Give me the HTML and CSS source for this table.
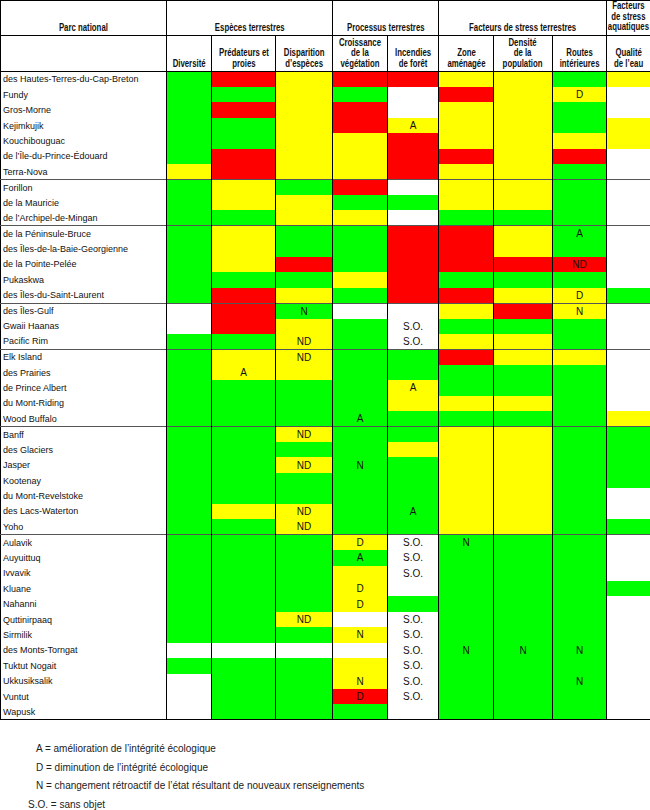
FILE: index.html
```html
<!DOCTYPE html>
<html lang="fr">
<head>
<meta charset="utf-8">
<title>Parcs nationaux</title>
<link rel="stylesheet" href="styles.css">
</head>
<body>
<table class="grid">
<colgroup>
<col class="c-name"><col class="c-div"><col class="c-pred"><col class="c-disp"><col class="c-croi"><col class="c-inc"><col class="c-zone"><col class="c-dens"><col class="c-rout"><col class="c-qual">
</colgroup>
<thead>
<tr class="h1">
<th><span class="t">Parc national</span></th>
<th colspan="3"><span class="t">Espèces terrestres</span></th>
<th colspan="2"><span class="t">Processus terrestres</span></th>
<th colspan="3"><span class="t">Facteurs de stress terrestres</span></th>
<th class="top"><span class="t">Facteurs<br>de stress<br>aquatiques</span></th>
</tr>
<tr class="h2">
<th></th>
<th><span class="t">Diversité</span></th>
<th><span class="t">Prédateurs et<br>proies</span></th>
<th><span class="t">Disparition<br>d’espèces</span></th>
<th><span class="t">Croissance<br>de la<br>végétation</span></th>
<th><span class="t">Incendies<br>de forêt</span></th>
<th><span class="t">Zone<br>aménagée</span></th>
<th><span class="t">Densité<br>de la<br>population</span></th>
<th><span class="t">Routes<br>intérieures</span></th>
<th><span class="t">Qualité<br>de l’eau</span></th>
</tr>
</thead>
<tbody>
<tr class="sep"><th>des Hautes-Terres-du-Cap-Breton</th><td class="g"></td><td class="r"></td><td class="y"></td><td class="r"></td><td class="r"></td><td class="y"></td><td class="y"></td><td class="g"></td><td class="y"></td></tr>
<tr><th>Fundy</th><td class="g"></td><td class="g"></td><td class="y"></td><td class="g"></td><td></td><td class="r"></td><td class="y"></td><td class="y">D</td><td></td></tr>
<tr><th>Gros-Morne</th><td class="g"></td><td class="r"></td><td class="y"></td><td class="r"></td><td></td><td class="y"></td><td class="y"></td><td class="g"></td><td></td></tr>
<tr><th>Kejimkujik</th><td class="g"></td><td class="g"></td><td class="y"></td><td class="r"></td><td class="y">A</td><td class="y"></td><td class="y"></td><td class="g"></td><td class="y"></td></tr>
<tr><th>Kouchibouguac</th><td class="g"></td><td class="g"></td><td class="y"></td><td class="y"></td><td class="r"></td><td class="y"></td><td class="y"></td><td class="y"></td><td class="y"></td></tr>
<tr><th>de l’Île-du-Prince-Édouard</th><td class="g"></td><td class="r"></td><td class="y"></td><td class="y"></td><td class="r"></td><td class="r"></td><td class="y"></td><td class="r"></td><td></td></tr>
<tr><th>Terra-Nova</th><td class="y"></td><td class="r"></td><td class="y"></td><td class="y"></td><td class="r"></td><td class="y"></td><td class="y"></td><td class="g"></td><td></td></tr>

<tr class="sep"><th>Forillon</th><td class="g"></td><td class="y"></td><td class="g"></td><td class="r"></td><td></td><td class="y"></td><td class="y"></td><td class="g"></td><td></td></tr>
<tr><th>de la Mauricie</th><td class="g"></td><td class="y"></td><td class="y"></td><td class="g"></td><td class="g"></td><td class="y"></td><td class="y"></td><td class="g"></td><td></td></tr>
<tr><th>de l’Archipel-de-Mingan</th><td class="g"></td><td class="g"></td><td class="y"></td><td class="y"></td><td></td><td class="g"></td><td class="g"></td><td class="g"></td><td></td></tr>

<tr class="sep"><th>de la Péninsule-Bruce</th><td class="g"></td><td class="y"></td><td class="g"></td><td class="g"></td><td class="r"></td><td class="r"></td><td class="y"></td><td class="g">A</td><td></td></tr>
<tr><th>des Îles-de-la-Baie-Georgienne</th><td class="g"></td><td class="y"></td><td class="g"></td><td class="g"></td><td class="r"></td><td class="r"></td><td class="y"></td><td class="g"></td><td></td></tr>
<tr><th>de la Pointe-Pelée</th><td class="g"></td><td class="y"></td><td class="r"></td><td class="g"></td><td class="r"></td><td class="r"></td><td class="r"></td><td class="r">ND</td><td></td></tr>
<tr><th>Pukaskwa</th><td class="g"></td><td class="g"></td><td class="g"></td><td class="y"></td><td class="r"></td><td class="g"></td><td class="g"></td><td class="g"></td><td></td></tr>
<tr><th>des Îles-du-Saint-Laurent</th><td class="g"></td><td class="r"></td><td class="y"></td><td class="g"></td><td class="r"></td><td class="r"></td><td class="y"></td><td class="y">D</td><td class="g"></td></tr>

<tr class="sep"><th>des Îles-Gulf</th><td></td><td class="r"></td><td class="g">N</td><td></td><td></td><td class="y"></td><td class="r"></td><td class="y">N</td><td></td></tr>
<tr><th>Gwaii Haanas</th><td></td><td class="r"></td><td class="y"></td><td class="g"></td><td>S.O.</td><td class="g"></td><td class="g"></td><td class="g"></td><td></td></tr>
<tr><th>Pacific Rim</th><td class="g"></td><td class="g"></td><td class="y">ND</td><td class="g"></td><td>S.O.</td><td class="y"></td><td class="y"></td><td class="g"></td><td></td></tr>

<tr class="sep"><th>Elk Island</th><td class="g"></td><td class="y"></td><td class="y">ND</td><td class="g"></td><td class="g"></td><td class="r"></td><td class="y"></td><td class="y"></td><td></td></tr>
<tr><th>des Prairies</th><td class="g"></td><td class="y">A</td><td class="y"></td><td class="g"></td><td class="g"></td><td class="g"></td><td class="g"></td><td class="g"></td><td></td></tr>
<tr><th>de Prince Albert</th><td class="g"></td><td class="g"></td><td class="g"></td><td class="g"></td><td class="y">A</td><td class="g"></td><td class="g"></td><td class="g"></td><td></td></tr>
<tr><th>du Mont-Riding</th><td class="g"></td><td class="g"></td><td class="g"></td><td class="g"></td><td class="y"></td><td class="y"></td><td class="y"></td><td class="g"></td><td></td></tr>
<tr><th>Wood Buffalo</th><td class="g"></td><td class="g"></td><td class="g"></td><td class="g">A</td><td class="g"></td><td class="g"></td><td class="g"></td><td class="g"></td><td class="y"></td></tr>

<tr class="sep"><th>Banff</th><td class="g"></td><td class="g"></td><td class="y">ND</td><td class="g"></td><td class="g"></td><td class="y"></td><td class="y"></td><td class="g"></td><td class="g"></td></tr>
<tr><th>des Glaciers</th><td class="g"></td><td class="g"></td><td class="g"></td><td class="g"></td><td class="y"></td><td class="y"></td><td class="y"></td><td class="g"></td><td class="g"></td></tr>
<tr><th>Jasper</th><td class="g"></td><td class="g"></td><td class="y">ND</td><td class="g">N</td><td class="g"></td><td class="y"></td><td class="y"></td><td class="g"></td><td class="g"></td></tr>
<tr><th>Kootenay</th><td class="g"></td><td class="g"></td><td class="g"></td><td class="g"></td><td class="g"></td><td class="y"></td><td class="y"></td><td class="g"></td><td class="g"></td></tr>
<tr><th>du Mont-Revelstoke</th><td class="g"></td><td class="g"></td><td class="g"></td><td class="g"></td><td class="g"></td><td class="y"></td><td class="y"></td><td class="g"></td><td></td></tr>
<tr><th>des Lacs-Waterton</th><td class="g"></td><td class="y"></td><td class="y">ND</td><td class="g"></td><td class="g">A</td><td class="y"></td><td class="y"></td><td class="g"></td><td></td></tr>
<tr><th>Yoho</th><td class="g"></td><td class="g"></td><td class="y">ND</td><td class="g"></td><td class="g"></td><td class="y"></td><td class="y"></td><td class="g"></td><td class="g"></td></tr>

<tr class="sep"><th>Aulavik</th><td class="g"></td><td class="g"></td><td class="g"></td><td class="y">D</td><td>S.O.</td><td class="g">N</td><td class="g"></td><td class="g"></td><td></td></tr>
<tr><th>Auyuittuq</th><td class="g"></td><td class="g"></td><td class="g"></td><td class="g">A</td><td>S.O.</td><td class="g"></td><td class="g"></td><td class="g"></td><td></td></tr>
<tr><th>Ivvavik</th><td class="g"></td><td class="g"></td><td class="g"></td><td class="y"></td><td>S.O.</td><td class="g"></td><td class="g"></td><td class="g"></td><td></td></tr>
<tr><th>Kluane</th><td class="g"></td><td class="g"></td><td class="g"></td><td class="y">D</td><td></td><td class="g"></td><td class="g"></td><td class="g"></td><td class="g"></td></tr>
<tr><th>Nahanni</th><td class="g"></td><td class="g"></td><td class="g"></td><td class="y">D</td><td class="g"></td><td class="g"></td><td class="g"></td><td class="g"></td><td></td></tr>
<tr><th>Quttinirpaaq</th><td class="g"></td><td class="g"></td><td class="y">ND</td><td></td><td>S.O.</td><td class="g"></td><td class="g"></td><td class="g"></td><td></td></tr>
<tr><th>Sirmilik</th><td class="g"></td><td class="g"></td><td class="g"></td><td class="y">N</td><td>S.O.</td><td class="g"></td><td class="g"></td><td class="g"></td><td></td></tr>
<tr><th>des Monts-Torngat</th><td></td><td></td><td></td><td></td><td>S.O.</td><td class="g">N</td><td class="g">N</td><td class="g">N</td><td></td></tr>
<tr><th>Tuktut Nogait</th><td class="g"></td><td class="g"></td><td class="g"></td><td class="y"></td><td>S.O.</td><td class="g"></td><td class="g"></td><td class="g"></td><td></td></tr>
<tr><th>Ukkusiksalik</th><td></td><td class="g"></td><td class="g"></td><td class="y">N</td><td>S.O.</td><td class="g"></td><td class="g"></td><td class="g">N</td><td></td></tr>
<tr><th>Vuntut</th><td></td><td class="g"></td><td class="g"></td><td class="r">D</td><td>S.O.</td><td class="g"></td><td class="g"></td><td class="g"></td><td></td></tr>
<tr><th>Wapusk</th><td></td><td class="g"></td><td class="g"></td><td class="g"></td><td></td><td class="g"></td><td class="g"></td><td class="g"></td><td></td></tr>
</tbody>
</table>

<div class="legend">
<p>A = amélioration de l’intégrité écologique</p>
<p>D = diminution de l’intégrité écologique</p>
<p>N = changement rétroactif de l’état résultant de nouveaux renseignements</p>
<p class="out">S.O. = sans objet</p>
</div>
</body>
</html>
```

FILE: styles.css
```css
html, body {
  margin: 0;
  padding: 0;
  background: #fff;
}

body {
  width: 650px;
  font-family: "Liberation Sans", Arial, sans-serif;
  color: #111;
}

.grid {
  width: 650px;
  border-collapse: collapse;
  table-layout: fixed;
  border: 1px solid #000;
}

.c-name { width: 166px; }
.c-div  { width: 45px; }
.c-pred { width: 64px; }
.c-disp { width: 57px; }
.c-croi { width: 55px; }
.c-inc  { width: 51px; }
.c-zone { width: 55px; }
.c-dens { width: 59px; }
.c-rout { width: 54px; }
.c-qual { width: 44px; }

thead th {
  font-family: "Liberation Sans", Arial, sans-serif;
  font-weight: bold;
  font-size: 10px;
  line-height: 10.5px;
  color: #111;
  text-align: center;
  vertical-align: bottom;
  padding: 0 0 2px;
  border: 1px solid #000;
  overflow: visible;
}

thead th .t {
  display: inline-block;
  white-space: nowrap;
  margin: 0 -20px;
  transform: scaleX(0.78);
  transform-origin: center;
}

.h1 th { height: 32px; }
.h2 th { height: 33px; }
.h1 th.top { vertical-align: top; padding-top: 0; padding-bottom: 0; }

tbody tr { height: 15.44px; }

tbody th {
  font-weight: normal;
  font-size: 9px;
  text-align: left;
  white-space: nowrap;
  padding: 0 0 0 2px;
  color: #111;
  border-right: 1px solid #000;
  vertical-align: middle;
}

tbody td {
  font-size: 10px;
  line-height: 11px;
  text-align: center;
  vertical-align: middle;
  padding: 0;
  border-left: 1px solid #000;
  border-right: 1px solid #000;
  color: #111;
}

tbody tr.sep th,
tbody tr.sep td {
  border-top: 1px solid #555;
}

.g { background: #00ff00; }
.y { background: #ffff00; }
.r { background: #ff0000; }

.legend {
  padding: 20px 0 0 36px;
  font-size: 10px;
  color: #222;
}

.legend p {
  margin: 0;
  line-height: 18.5px;
}

.legend p.out {
  margin-left: -8px;
}
```
